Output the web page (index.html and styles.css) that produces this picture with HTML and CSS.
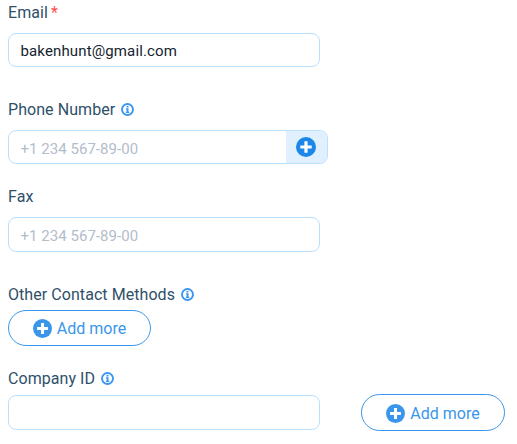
FILE: index.html
```html
<!DOCTYPE html>
<html lang="en">
<head>
<meta charset="utf-8">
<title>Contact details</title>
<link rel="stylesheet" href="styles.css">
</head>
<body>
<svg class="defs" width="0" height="0" aria-hidden="true">
  <symbol id="info" viewBox="0 0 13 13"><circle cx="6.5" cy="6.5" r="5.5" fill="none" stroke="currentColor" stroke-width="1.9"/><path fill="currentColor" d="M5.500 3h2v1.500h-2zM4.900 5.200h2.600v3.600h.8v1.200H4.900v-1.200h.7V6.400h-.7z"/></symbol>
  <symbol id="plus" viewBox="0 0 20 20"><circle cx="10" cy="10" r="10" fill="currentColor"/><path fill="none" stroke="#fff" stroke-width="3.200" d="M10 4.300v11.400M4.300 10h11.400"/></symbol>
</svg>
<form class="form">
  <div class="field email">
    <label class="label" for="email">Email<span class="required">*</span></label>
    <input class="input" id="email" type="text" value="bakenhunt@gmail.com">
  </div>
  <div class="field phone">
    <label class="label" for="phone">Phone Number<svg class="info"><use href="#info"/></svg></label>
    <div class="group">
      <input class="group-input" id="phone" type="text" placeholder="+1 234 567-89-00">
      <button class="append" type="button" aria-label="Add"><svg class="plus-large"><use href="#plus"/></svg></button>
    </div>
  </div>
  <div class="field fax">
    <label class="label" for="fax">Fax</label>
    <input class="input tall" id="fax" type="text" placeholder="+1 234 567-89-00">
  </div>
  <div class="field other">
    <div class="label">Other Contact Methods<svg class="info"><use href="#info"/></svg></div>
    <button class="add" type="button"><svg class="plus"><use href="#plus"/></svg>Add more</button>
  </div>
  <div class="field company">
    <label class="label" for="company">Company ID<svg class="info"><use href="#info"/></svg></label>
    <div class="row">
      <input class="input tall" id="company" type="text">
      <button class="add add-wide" type="button"><svg class="plus"><use href="#plus"/></svg>Add more</button>
    </div>
  </div>
</form>
</body>
</html>
```

FILE: styles.css
```css
* { box-sizing: border-box; }
body { margin: 0; background: #fff; font-family: Roboto, sans-serif; overflow: hidden; }
.defs { display: block; }
.form { display: flex; flex-direction: column; padding: 3px 0 0 8px; }
.field { display: flex; flex-direction: column; align-items: flex-start; }
.label { display: flex; align-items: center; height: 20px; font-size: 16px; line-height: 20px; letter-spacing: 0.06px; color: #2f5069; }
.required { margin-left: 3px; color: #ff4d4f; }
.info { width: 13px; height: 13px; margin: 0 0 2px 6px; color: #3a96f0; }
.input, .group { width: 312px; height: 34px; border: 1px solid #bae0ff; border-radius: 8px; background: #fff; }
.input, .group-input { padding: 1px 11px 0 11.5px; font: 15px Roboto, sans-serif; letter-spacing: 0.04px; color: #14242f; outline: 0; }
.tall { height: 35px; }
input::placeholder { color: #b2bdca; opacity: 1; }
.email .input { letter-spacing: 0.13px; }
.email .label { margin-bottom: 10px; }
.phone { margin-top: 33px; }
.phone .label { margin-bottom: 10px; }
.group { display: flex; width: 320px; overflow: hidden; }
.group-input { flex: 1; min-width: 0; border: 0; background: transparent; padding-top: 3px; }
.append { display: flex; align-items: center; justify-content: center; width: 41px; padding: 0 1px 0 0; border: 0; background: #e0f0ff; color: #1b87e8; }
.plus-large { width: 20px; height: 20px; }
.fax { margin-top: 23px; }
.fax .label { margin-bottom: 10px; }
.fax .input { padding-top: 3px; }
.other { margin-top: 33px; }
.other .label { margin-bottom: 5px; }
.add { display: flex; align-items: center; justify-content: center; gap: 5px; width: 143px; height: 36px; padding: 0; border: 1px solid #3a96ea; border-radius: 19px; background: #fff; color: #3a96ea; font: 16px Roboto, sans-serif; }
.plus { width: 19px; height: 19px; margin-top: 1px; }
.company { margin-top: 23px; }
.company .label { margin-bottom: 5px; }
.row { display: flex; align-items: center; gap: 41px; }
.add-wide { width: 144px; height: 37px; padding-top: 1px; }
```
